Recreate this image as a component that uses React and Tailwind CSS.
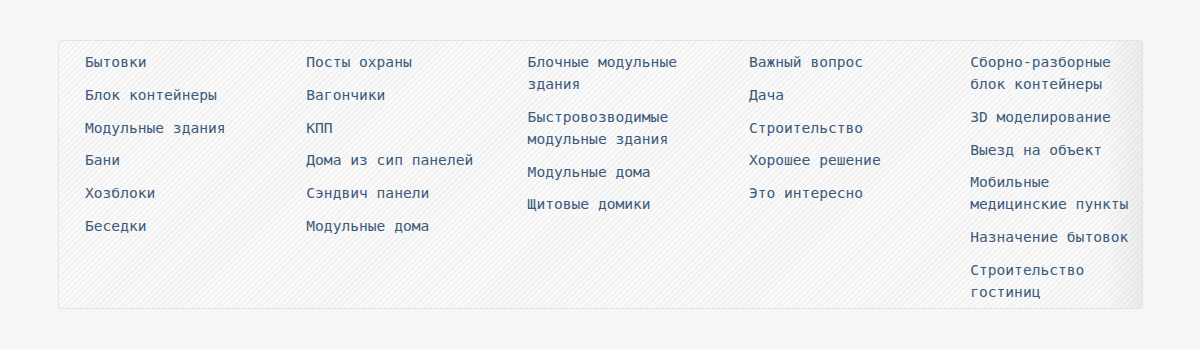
import React from "react";

const columns = [
  ["Бытовки", "Блок контейнеры", "Модульные здания", "Бани", "Хозблоки", "Беседки"],
  ["Посты охраны", "Вагончики", "КПП", "Дома из сип панелей", "Сэндвич панели", "Модульные дома"],
  ["Блочные модульные здания", "Быстровозводимые модульные здания", "Модульные дома", "Щитовые домики"],
  ["Важный вопрос", "Дача", "Строительство", "Хорошее решение", "Это интересно"],
  [
    "Сборно-разборные блок контейнеры",
    "3D моделирование",
    "Выезд на объект",
    "Мобильные медицинские пункты",
    "Назначение бытовок",
    "Строительство гостиниц",
  ],
];

export default function App() {
  return (
    <div className="w-[1200px] h-[349px] bg-[#f5f6f8] pt-[40px] pl-[58px]">
      <div className="relative w-[1085px] h-[269px] rounded-[4px] border border-[#e2e4e7] overflow-hidden bg-[repeating-linear-gradient(135deg,#fafafa_0px,#fafafa_2px,#f2f2f2_2px,#f2f2f2_4px)]">
        <div className="grid grid-cols-[repeat(5,176px)] gap-x-[45.3px] pl-[26px] pt-[10px] font-['DejaVu_Sans_Mono',monospace] text-[14.6px] leading-[22px] text-[#3c5a7b]">
          {columns.map((col, i) => (
            <ul key={i} className="flex flex-col gap-[10.8px]">
              {col.map((t) => (
                <li key={t}>
                  <a className="cursor-pointer">{t}</a>
                </li>
              ))}
            </ul>
          ))}
        </div>
        <div className="absolute right-0 top-0 bottom-0 w-[40px] bg-gradient-to-r from-transparent to-[rgba(0,0,0,0.05)] pointer-events-none" />
      </div>
    </div>
  );
}
